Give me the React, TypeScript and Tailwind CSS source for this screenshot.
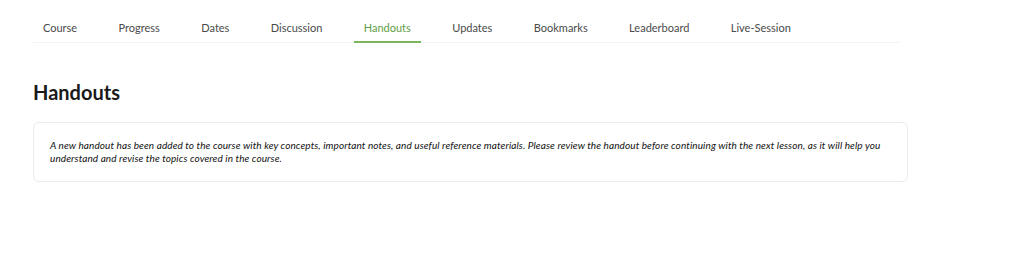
const tabs = ["Course", "Progress", "Dates", "Discussion", "Handouts", "Updates", "Bookmarks", "Leaderboard", "Live-Session"];

export default function App() {
  const active = "Handouts";

  return (
    <div className="min-h-[263px] w-[1024px] bg-white font-['Lato','Noto_Sans',sans-serif]">
      <div className="px-[33px]">
        <nav className="flex w-[867px] gap-[21.4px] border-b border-[#f3f3f3]">
          {tabs.map((t) => (
            <div
              key={t}
              className={
                t === active
                  ? "-mb-px border-b-2 border-[#7ab55c] px-[10px] pt-[20px] pb-[6px] text-[11px] leading-[15px] text-[#5e9e45]"
                  : "-mb-px border-b-2 border-transparent px-[10px] pt-[20px] pb-[6px] text-[11px] leading-[15px] text-[#4a4a4a]"
              }
            >
              {t}
            </div>
          ))}
        </nav>

        <h1 className="mt-[38px] text-[20px] font-bold leading-[23px] text-[#1a1a1a]">Handouts</h1>

        <div className="mt-[18px] w-[875px] rounded-md border border-[#ebebeb] px-[16px] pt-[16px] pb-[16px]">
          <p className="text-[10px] italic leading-[13px] tracking-[0.1px] text-[#111]">
            A new handout has been added to the course with key concepts, important notes, and useful reference materials. Please review the handout before continuing with the next lesson, as it will help you understand and revise the topics covered in the course.
          </p>
        </div>
      </div>
    </div>
  );
}
